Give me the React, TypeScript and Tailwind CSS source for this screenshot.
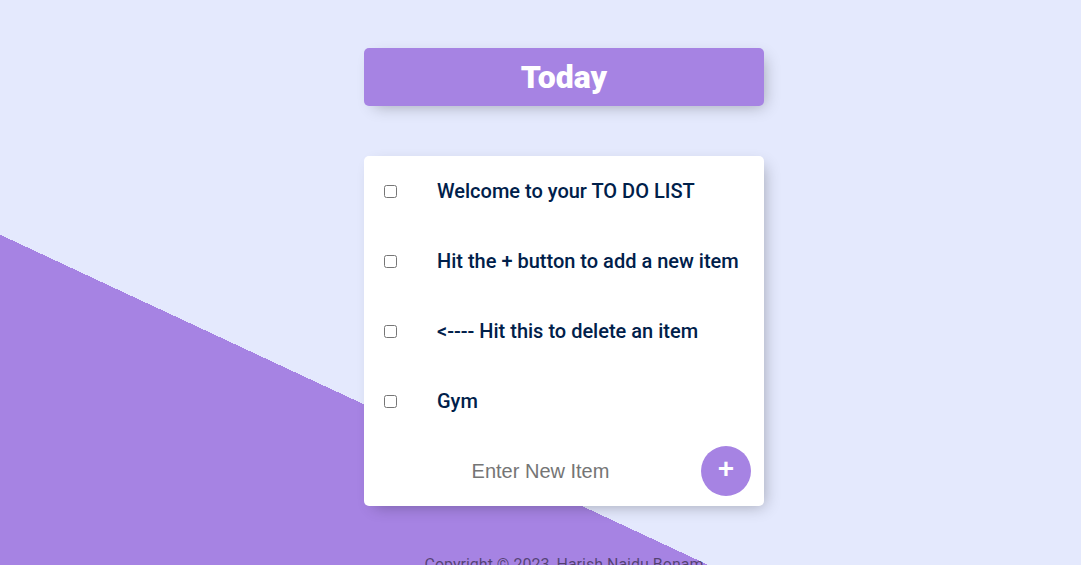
import React from 'react';

const items = [
  'Welcome to your TO DO LIST',
  'Hit the + button to add a new item',
  '<---- Hit this to delete an item',
  'Gym',
];

export default function App() {
  return (
    <div className="h-[565px] overflow-hidden bg-[#E4E9FD] bg-[linear-gradient(25deg,#A683E3_30.9%,#E4E9FD_30.9%)] pl-[47px] font-['Roboto',sans-serif]">
      <div className="mx-auto max-w-[400px] pt-[48px]">
        <div className="flex h-[58px] items-center justify-center rounded-[5px] bg-[#A683E3] shadow-[5px_5px_15px_-5px_rgba(0,0,0,0.3)]">
          <h1 className="text-[32px] font-black leading-[37px] text-white">Today</h1>
        </div>

        <div className="mt-[50px] rounded-[5px] bg-white shadow-[5px_5px_15px_-5px_rgba(0,0,0,0.3)]">
          {items.map((text) => (
            <div key={text} className="flex min-h-[70px] items-center">
              <input type="checkbox" className="m-[20px] h-[13px] w-[13px] shrink-0" />
              <p className="m-0 p-[20px] text-[20px] font-medium text-[#00204a]">{text}</p>
            </div>
          ))}

          <form className="ml-[20px] flex min-h-[70px] items-center" onSubmit={(e) => e.preventDefault()}>
            <input
              type="text"
              placeholder="Enter New Item"
              className="h-[60px] w-[313px] border-none bg-transparent text-center font-['Liberation_Sans',Arial,sans-serif] text-[20px] outline-none placeholder:text-[#757575]"
            />
            <button
              type="submit"
              className="ml-[4px] flex h-[50px] w-[50px] items-center justify-center rounded-full bg-[#A683E3] pb-[4px] font-['Liberation_Sans',Arial,sans-serif] text-[28px] font-bold text-white"
            >
              +
            </button>
          </form>
        </div>
      </div>

      <footer className="mt-[47px] text-center text-[16px] text-black/50">
        Copyright © 2023, Harish Naidu Bonam
      </footer>
    </div>
  );
}
